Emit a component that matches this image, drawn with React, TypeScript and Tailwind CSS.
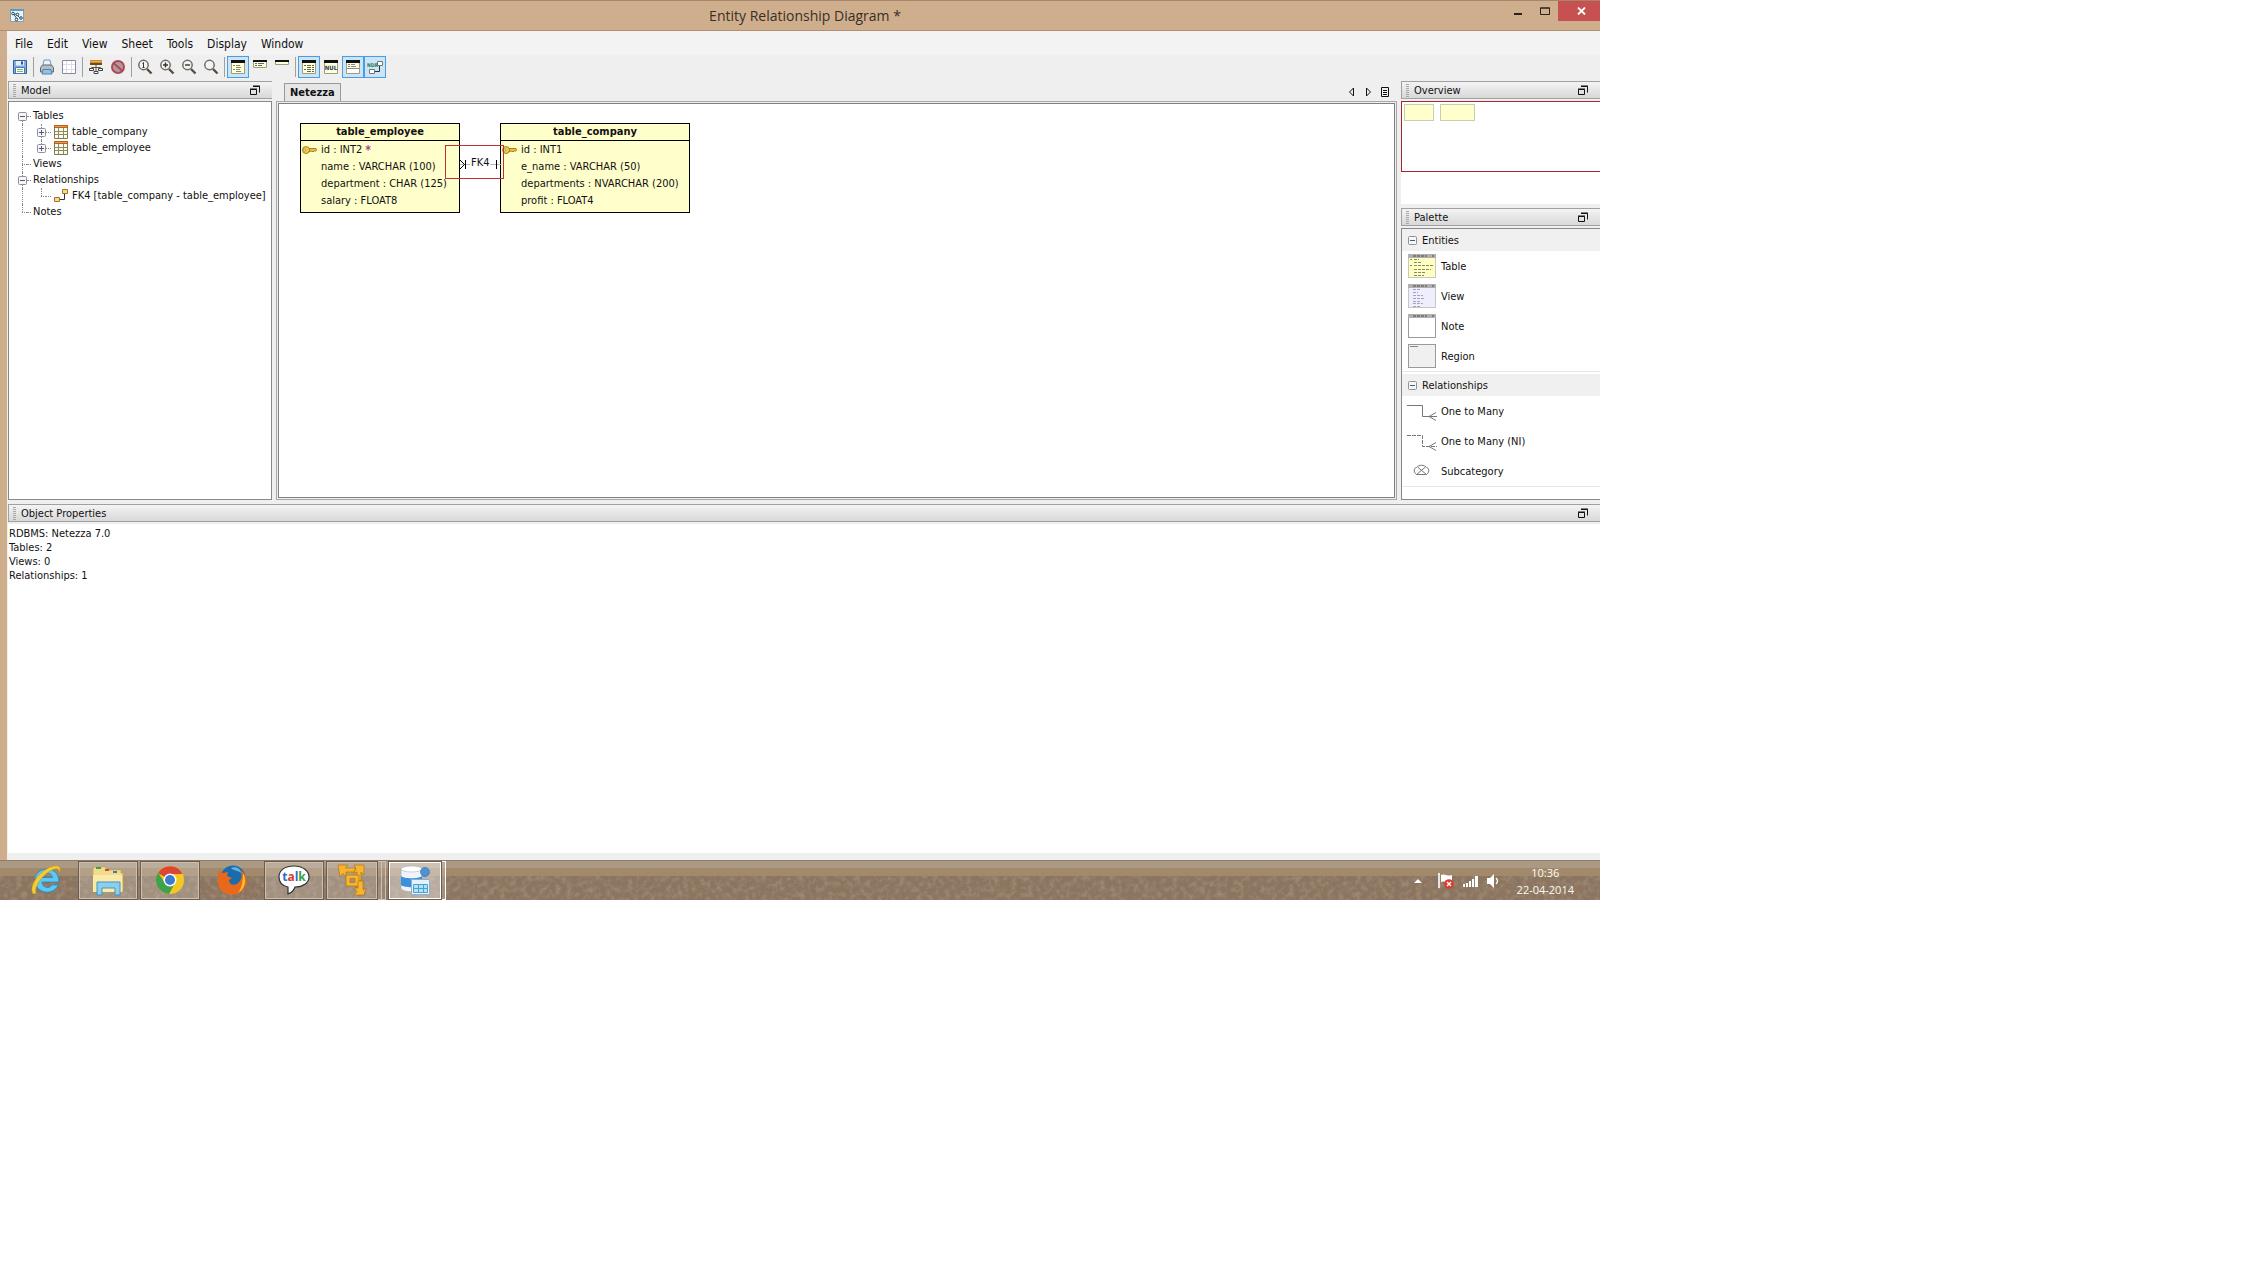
import React from 'react';
import clsx from 'clsx';

const Sep = () => <div className="mx-0.5 h-[20px] w-px shrink-0 bg-[#a0a0a0]"></div>;

const ToolButton = ({ label, active, children }: { label: string; active?: boolean; children: React.ReactNode }) => (
  <button
    aria-label={label}
    className={clsx(
      'flex h-[22px] w-[22px] shrink-0 items-center justify-center border',
      active ? 'border-[#4a9de0] bg-[#cce4f8]' : 'border-transparent',
    )}
  >
    <svg width="16" height="16" viewBox="0 0 16 16">
      {children}
    </svg>
  </button>
);

const Lens = ({ children }: { children?: React.ReactNode }) => (
  <>
    <path d="M10 10l4.5 4.5" stroke="#5b4a44" strokeWidth="2.4" />
    <circle cx="6.5" cy="6" r="4.7" fill="#f4f4f0" stroke="#6f6c64" strokeWidth="1.5" />
    {children}
  </>
);

const RestoreIcon = () => (
  <svg width="12" height="12" viewBox="0 0 12 12" fill="none" stroke="#111">
    <path d="M4 1.5h6.5v6" />
    <path d="M1.5 4.5h6v5h-6z" />
    <path d="M1 4h7M4 1h7" />
  </svg>
);

const PanelHeader = ({ title }: { title: string }) => (
  <div className="flex h-[18px] shrink-0 items-center border border-r-0 border-[#a0a0a0] bg-gradient-to-b from-[#f4f4f4] to-[#d8d8d8] pl-1 pr-[11px]">
    <div className="h-[13px] w-[3px] bg-[repeating-linear-gradient(#a8a8a8_0_1px,transparent_1px_2px)]"></div>
    <h2 className="grow pl-[5px] pt-0.5">{title}</h2>
    <button aria-label={'Float ' + title} className="pt-0.5">
      <RestoreIcon />
    </button>
  </div>
);

const Expander = ({ open }: { open: boolean }) => (
  <svg className="relative shrink-0" width="9" height="9" viewBox="0 0 9 9">
    <rect x=".5" y=".5" width="8" height="8" rx="1" fill="#f6f6f6" stroke="#919191" />
    <path d="M2 4.5h5" stroke="#44589c" />
    {!open && <path d="M4.5 2v5" stroke="#44589c" />}
  </svg>
);

const GridIcon = () => (
  <svg width="14" height="14" viewBox="0 0 14 14">
    <path d="M.5 .5h13v13H.5z" fill="#fdfbe6" stroke="#7d7a5c" />
    <path d="M0 0h14v3H0z" fill="#b8651b" />
    <path d="M1 1h12v1H1z" fill="#e39a4e" />
    <path d="M1 6.5h12M1 9.5h12M4.5 3v10M9.5 3v10" stroke="#8d8a6c" />
  </svg>
);

const LinkIcon = () => (
  <svg width="14" height="14" viewBox="0 0 14 14">
    <path d="M5 10.5h5.5V4" fill="none" stroke="#333" />
    <path d="M.5 8.5h5v4h-5zM8.500 .5h5v4h-5z" fill="#f9d98a" stroke="#a4722a" />
  </svg>
);

const TreeRow = ({ label, open, first, last }: { label: string; open?: boolean; first?: boolean; last?: boolean }) => (
  <div className="relative flex h-4 items-center pl-[9px]">
    <div
      className={clsx(
        'absolute left-[13px] w-px border-l border-dotted border-[#888]',
        first ? 'bottom-0 h-2' : last ? 'top-0 h-2' : 'top-0 h-4',
      )}
    ></div>
    {open ? <Expander open /> : <div className="ml-1 w-[5px] border-t border-dotted border-[#888]"></div>}
    <div className="w-1 border-t border-dotted border-[#888]"></div>
    <span className="pl-[2px]">{label}</span>
  </div>
);

const TreeLeaf = ({ label, link, endOfList }: { label: string; link?: boolean; endOfList?: boolean }) => (
  <div className="relative flex h-4 items-center pl-[28px]">
    <div className="absolute left-[13px] top-0 h-4 w-px border-l border-dotted border-[#888]"></div>
    <div className={clsx('absolute left-[32px] top-0 w-px border-l border-dotted border-[#888]', endOfList ? 'h-2' : 'h-4')}></div>
    {link ? <div className="ml-1 w-[5px] border-t border-dotted border-[#888]"></div> : <Expander open={false} />}
    <div className="mr-[3px] w-[5px] border-t border-dotted border-[#888]"></div>
    {link ? <LinkIcon /> : <GridIcon />}
    <span className="whitespace-nowrap pl-1">{label}</span>
  </div>
);

const KeyIcon = () => (
  <svg width="15" height="10" viewBox="0 0 15 10">
    <path d="M6 3.500h8l.7 1.500-1.500 1.500-1-.8-1.200 1.300-1-1L8 6.500H6z" fill="#f0c040" stroke="#8f6a10" strokeWidth=".8" />
    <circle cx="4" cy="5" r="3.500" fill="#f6cf4a" stroke="#8f6a10" strokeWidth=".8" />
    <circle cx="2.800" cy="5" r="1.200" fill="#fffbe0" stroke="#8f6a10" strokeWidth=".6" />
  </svg>
);

const Entity = ({ name, columns, className, required }: { name: string; columns: string[]; className: string; required?: boolean }) => (
  <div className={clsx('absolute top-[19px] h-[90px] border border-black bg-[#ffffcc]', className)}>
    <div className="flex h-[17px] items-center justify-center border-b border-black font-bold">{name}</div>
    {columns.map((col, i) => (
      <div key={col} className="flex h-[17px] items-center">
        <div className="w-5 pl-px">{i === 0 && <KeyIcon />}</div>
        <span className="whitespace-nowrap">{col}</span>
        {i === 0 && required && <span className="pl-[3px] text-[12px] font-bold text-[#a83c98]">*</span>}
      </div>
    ))}
  </div>
);

const SheetThumb = ({ kind }: { kind: 'table' | 'view' | 'note' | 'region' }) => {
  const fill = { table: '#ffffc4', view: '#eeeeff', note: '#ffffff', region: '#f0f0f0' }[kind];
  return (
    <svg width="30" height="24" viewBox="0 0 30 24">
      <rect x="1.500" y=".5" width="27" height="23" fill={fill} stroke={kind === 'table' || kind === 'view' ? '#c8c8b8' : '#9a9a9a'} />
      {kind === 'region' ? (
        <path d="M3 2.500h8" stroke="#888" />
      ) : (
        <>
          <path d="M1 0h28v4H1z" fill="#b0b0b0" />
          <path d="M6 2h14M25 2h2" stroke="#4a4a4a" strokeDasharray="3 1" />
        </>
      )}
      {kind === 'table' && (
        <path d="M3 5.500h2M7 5.500h5M7 8.500h8M3 11.500h2M7 11.500h19M7 15.500h17M7 18.500h12M7 21.500h10" stroke="#88886a" strokeDasharray="3 1" />
      )}
      {kind === 'view' && (
        <path d="M6 5.500h8M6 8.500h5M6 11.500h10M6 14.500h12M6 17.500h8M6 19.500h10M6 22.500h8" stroke="#a4a4ba" strokeDasharray="3 1" />
      )}
    </svg>
  );
};

const CrowIcon = ({ dashed }: { dashed?: boolean }) => (
  <svg width="30" height="20" viewBox="0 0 30 20" fill="none" stroke="#777">
    <path d="M0 4.500h15.500v11H30" strokeDasharray={dashed ? '4 1' : undefined} />
    <path d="M22 15.500l7-4M22 15.500l7 4" />
  </svg>
);

const SubcategoryIcon = () => (
  <svg width="30" height="20" viewBox="0 0 30 20" fill="none" stroke="#777">
    <path d="M9.500 13.500c-4-3-2-7 0-7 2-3 8-3 10 0 2 0 4 4 0 7z" />
    <path d="M10.500 6l9 7.500M18.500 6l-9 7.500" />
  </svg>
);

const PaletteGroup = ({ title, items }: { title: string; items: { label: string; icon: React.ReactNode }[] }) => (
  <section className="mb-0.5 border-b border-[#e8e8e8]">
    <h3 className="flex h-[22px] items-center bg-[#f0f0f0] pl-[6px] pt-px">
      <Expander open />
      <span className="pl-[5px] pt-px">{title}</span>
    </h3>
    {items.map((item) => (
      <button key={item.label} className="flex h-[30px] w-full items-center pl-[5px] text-left">
        {item.icon}
        <span className="pl-1 pt-0.5">{item.label}</span>
      </button>
    ))}
  </section>
);

const Task = ({ label, framed, children }: { label: string; framed?: boolean; children: React.ReactNode }) => (
  <button
    aria-label={label}
    className={clsx(
      'flex h-[39px] w-[60px] items-center justify-center border',
      framed ? 'border-[#6e5d4f] bg-white/20 outline outline-[#cbbfb3] -outline-offset-2' : 'border-transparent',
    )}
  >
    {children}
  </button>
);

const entityItems = [
  { label: 'Table', icon: <SheetThumb kind="table" /> },
  { label: 'View', icon: <SheetThumb kind="view" /> },
  { label: 'Note', icon: <SheetThumb kind="note" /> },
  { label: 'Region', icon: <SheetThumb kind="region" /> },
];

const relationItems = [
  { label: 'One to Many', icon: <CrowIcon /> },
  { label: 'One to Many (NI)', icon: <CrowIcon dashed /> },
  { label: 'Subcategory', icon: <SubcategoryIcon /> },
];

const App = () => {
  return (
    <div className="min-h-screen bg-white">
      <div className="w-full max-w-[1600px] bg-[#cfae8d] font-['DejaVu_Sans_Condensed','DejaVu_Sans',sans-serif] text-[11px] leading-[14px] text-[#111]">
        {/* Title bar */}
        <header className="flex h-[31px] items-start border-b border-t border-b-[#b09070] border-t-[#a58668]">
          <svg className="ml-[10px] mt-2" width="14" height="13" viewBox="0 0 14 13">
            <path d="M.5 .5h13v12H.5z" fill="#eaf4fa" stroke="#7ba0b8" />
            <path d="M0 0h14v2H0z" fill="#5d9cc4" />
            <path d="M3 4l4 2 4 4M3 4l4 6" fill="none" stroke="#31566e" />
            <g fill="#fff" stroke="#1f4660">
              <circle cx="3" cy="4.500" r="1.300" />
              <circle cx="7.500" cy="5.500" r="1.300" />
              <circle cx="6.500" cy="10.500" r="1.300" />
              <circle cx="11" cy="9" r="1.300" />
            </g>
          </svg>
          <h1 className="grow pl-[82px] pt-[5px] text-center font-['Open_Sans',sans-serif] text-[14px] leading-[20px] text-[#3a2f24]">
            Entity Relationship Diagram *
          </h1>
          <button aria-label="Minimize" className="flex h-5 w-7 items-center justify-center">
            <svg width="10" height="10" viewBox="0 0 10 10">
              <path d="M1 7h8v2H1z" fill="#2a211a" />
            </svg>
          </button>
          <button aria-label="Maximize" className="flex h-5 w-[26px] items-center justify-center">
            <svg width="10" height="8" viewBox="0 0 10 8">
              <path d="M.5 1h9v6.500h-9zM0 1h10" fill="none" stroke="#2a211a" />
            </svg>
          </button>
          <button aria-label="Close" className="flex h-5 w-[42px] items-center justify-center bg-[#c75050] pl-1">
            <svg width="9" height="8" viewBox="0 0 9 8">
              <path d="M1 .5l7 7M8 .5l-7 7" stroke="#fff" strokeWidth="1.800" />
            </svg>
          </button>
        </header>

        <div className="ml-[7px] flex flex-col bg-[#efefef]">
          {/* Menu */}
          <nav className="flex h-6 items-center gap-[14px] bg-[#f3f3f3] pl-2 pt-0.5 text-[12px]">
            {['File', 'Edit', 'View', 'Sheet', 'Tools', 'Display', 'Window'].map((item) => (
              <button key={item}>{item}</button>
            ))}
          </nav>

          {/* Toolbar */}
          <div className="flex h-[26px] items-center pl-0.5 pb-0.5">
            <ToolButton label="Save">
              <path d="M1.500 1.500h13v13h-13z" fill="#7fb0e4" stroke="#33609c" />
              <path d="M4 2h8v4.500H4z" fill="#e6eff9" />
              <path d="M9 2.500h2v3H9z" fill="#2f5690" />
              <path d="M3.500 8.500h9v6h-9z" fill="#fff" stroke="#4b78b4" />
              <path d="M5 10.500h6M5 12.500h6" stroke="#7cb86a" />
            </ToolButton>
            <Sep />
            <ToolButton label="Print">
              <path d="M5 1h6l1.500 7h-9z" fill="#e8f3ff" stroke="#7a94b4" />
              <path d="M1.500 8.500l2-2.500h9l2 2.500v4.500h-13z" fill="#b4bcc6" stroke="#5e6872" />
              <path d="M4 10.500h8l1 4.500H3z" fill="#8cc4f0" stroke="#5a7fa4" />
            </ToolButton>
            <ToolButton label="Page grid">
              <path d="M1.500 1.500h13v13h-13z" fill="#fff" stroke="#8888a0" />
              <path d="M2 5.500h12M2 10.500h12M5.500 2v12M10.500 2v12" stroke="#dcdcea" />
            </ToolButton>
            <Sep />
            <ToolButton label="Layout">
              <path d="M2 1h12v5H2z" fill="#6e4a24" />
              <path d="M2 2.500h12" stroke="#f4a838" strokeWidth="2.400" />
              <path d="M8 6v6M3.500 10V8.500h9V10" stroke="#555" fill="none" />
              <path d="M1.500 9.500h4v2h-4zM10.500 9.500h4v2h-4zM6 12.500h4v2H6z" fill="#fff" stroke="#444" />
            </ToolButton>
            <ToolButton label="Stop">
              <circle cx="8" cy="8" r="6" fill="#b09c9c" stroke="#b0485a" strokeWidth="2" />
              <path d="M3.500 4l9 8" stroke="#b0485a" strokeWidth="2" />
            </ToolButton>
            <Sep />
            <ToolButton label="Actual size">
              <Lens>
                <path d="M5.500 4.500l1-1v5M5.500 8.500h2" stroke="#333" fill="none" />
              </Lens>
            </ToolButton>
            <ToolButton label="Zoom in">
              <Lens>
                <path d="M4 6h5M6.500 3.500v5" stroke="#333" strokeWidth="1.400" />
              </Lens>
            </ToolButton>
            <ToolButton label="Zoom out">
              <Lens>
                <path d="M4 6h5" stroke="#333" strokeWidth="1.400" />
              </Lens>
            </ToolButton>
            <ToolButton label="Zoom">
              <Lens />
            </ToolButton>
            <Sep />
            <ToolButton label="Show columns" active>
              <path d="M1.500 1.500h13v13h-13z" fill="#ffffdc" stroke="#9c9c84" />
              <path d="M1 1h14v3H1z" fill="#111" />
              <path d="M3 6.500h2M6 6.500h4M6 8.500h5M3 10.500h2M6 10.500h4M6 12.500h5" stroke="#888860" />
            </ToolButton>
            <ToolButton label="Show keys">
              <path d="M1.500 1.500h13v7h-13z" fill="#ffffdc" stroke="#9c9c84" />
              <path d="M1 1h14v2H1z" fill="#111" />
              <path d="M3 4.500h2M6 4.500h6M3 6.500h2M6 6.500h4" stroke="#666" />
            </ToolButton>
            <ToolButton label="Show names">
              <path d="M1.500 1.500h13v4h-13z" fill="#ffffdc" stroke="#9c9c84" />
              <path d="M1 1h14v2H1z" fill="#111" />
            </ToolButton>
            <Sep />
            <ToolButton label="Data types" active>
              <path d="M1.500 1.500h13v13h-13z" fill="#ffffdc" stroke="#9c9c84" />
              <path d="M1 1h14v3H1z" fill="#111" />
              <path d="M3 6.500h2M6 6.500h4M11 6.500h2M6 8.500h4M11 8.500h2M3 10.500h2M6 10.500h4M11 10.500h2M6 12.500h4M11 12.500h2" stroke="#666650" />
            </ToolButton>
            <ToolButton label="Nullability">
              <path d="M1.500 1.500h13v13h-13z" fill="#ffffdc" stroke="#9c9c84" />
              <path d="M1 1h14v3H1z" fill="#111" />
              <text x="8" y="11" fontSize="6" fontWeight="bold" textAnchor="middle" fill="#1c3450">
                NUL
              </text>
            </ToolButton>
            <ToolButton label="Comments" active>
              <path d="M1.500 1.500h13v13h-13z" fill="#fff" stroke="#9c9c84" />
              <path d="M2 4h12v5H2z" fill="#ffffdc" />
              <path d="M1 1h14v3H1z" fill="#111" />
              <path d="M3 5.500h2M6 5.500h4M3 7.500h2M6 7.500h5M2 9.500h12" stroke="#888" />
            </ToolButton>
            <ToolButton label="Relation names" active>
              <path d="M6 12.500h6.500V6" stroke="#333" fill="none" />
              <path d="M10.500 2.500h5v4h-5zM2.500 10.500h5v4h-5z" fill="#fff" stroke="#777" />
              <text x="0" y="8" fontSize="5" fontWeight="bold" fill="#2c8050">
                NDR
              </text>
            </ToolButton>
          </div>

          {/* Workspace */}
          <div className="flex h-[419px] gap-1 pl-px">
            <aside className="flex w-[264px] shrink-0 flex-col gap-0.5">
              <PanelHeader title="Model" />
              <div className="grow border border-[#888] bg-white pt-[6px]">
                <TreeRow label="Tables" open first />
                <TreeLeaf label="table_company" />
                <TreeLeaf label="table_employee" endOfList />
                <TreeRow label="Views" />
                <TreeRow label="Relationships" open />
                <TreeLeaf label="FK4 [table_company - table_employee]" link endOfList />
                <TreeRow label="Notes" last />
              </div>
            </aside>

            <main className="flex min-w-0 grow flex-col">
              <div className="flex h-5 items-end justify-between pl-2">
                <button className="h-[18px] border border-b-0 border-[#999] bg-[#e6e6e6] px-[5px] font-bold">Netezza</button>
                <div className="flex items-center gap-[9px] pr-2 pb-1">
                  <button aria-label="Previous sheet">
                    <svg width="8" height="10" viewBox="0 0 8 10">
                      <path d="M6.500 1v8l-4-4z" fill="none" stroke="#111" />
                    </svg>
                  </button>
                  <button aria-label="Next sheet">
                    <svg width="8" height="10" viewBox="0 0 8 10">
                      <path d="M2.500 1v8l4-4z" fill="none" stroke="#111" />
                    </svg>
                  </button>
                  <button aria-label="Sheet list">
                    <svg width="8" height="10" viewBox="0 0 8 10">
                      <path d="M.5 .5h7v9h-7zM2 3.500h4M2 5.500h4M2 7.500h4" fill="none" stroke="#111" />
                    </svg>
                  </button>
                </div>
              </div>
              <div className="flex grow border border-[#a8a8a8] p-px">
                <div className="relative grow border border-[#808080] bg-white">
                  <Entity
                    name="table_employee"
                    className="left-[21px] w-[160px]"
                    columns={['id : INT2', 'name : VARCHAR (100)', 'department : CHAR (125)', 'salary : FLOAT8']}
                    required
                  />
                  <Entity
                    name="table_company"
                    className="left-[221px] w-[190px]"
                    columns={['id : INT1', 'e_name : VARCHAR (50)', 'departments : NVARCHAR (200)', 'profit : FLOAT4']}
                  />
                  <div className="absolute left-[166px] top-[41px] h-[34px] w-[59px] border border-[#c03030]">
                    <svg className="absolute left-[14px] top-[12px]" width="42" height="12" viewBox="0 0 42 12" fill="none">
                      <path d="M0 6.500h42" stroke="#bbb" />
                      <path d="M0 2l4.500 4.500-4.500 4.500M5.500 2v9M36.500 2v9" stroke="#000" />
                    </svg>
                    <span className="absolute left-[24px] top-[10px] bg-white px-px">FK4</span>
                  </div>
                </div>
              </div>
            </main>

            <aside className="flex w-[199px] shrink-0 flex-col">
              <PanelHeader title="Overview" />
              <div className="mt-0.5 h-[103px] bg-white">
                <div className="flex h-[71px] gap-[6px] border border-r-0 border-[#a02830] pl-0.5 pt-0.5">
                  <div className="h-[17px] w-[30px] border border-[#ccccb4] bg-[#ffffcc]"></div>
                  <div className="h-[17px] w-[35px] border border-[#ccccb4] bg-[#ffffcc]"></div>
                </div>
              </div>
              <div className="mt-1 flex grow flex-col gap-0.5">
                <PanelHeader title="Palette" />
                <div className="grow border border-r-0 border-[#888] bg-white">
                  <PaletteGroup title="Entities" items={entityItems} />
                  <PaletteGroup title="Relationships" items={relationItems} />
                </div>
              </div>
            </aside>
          </div>

          {/* Object properties */}
          <section className="mt-1 flex flex-col pl-px">
            <PanelHeader title="Object Properties" />
            <div className="mt-0.5 h-[329px] bg-white pl-px pt-[3px]">
              <p>RDBMS: Netezza 7.0</p>
              <p>Tables: 2</p>
              <p>Views: 0</p>
              <p>Relationships: 1</p>
            </div>
          </section>
          <div className="h-[7px]"></div>
        </div>

        {/* Taskbar */}
        <footer className="relative flex h-10 items-center bg-[linear-gradient(#8f7c66_0_1px,#ab9984_1px_8px,#a2896c_8px_16px,#8b7560_16px)] pl-4">
          {/* Sand texture */}
          <svg className="absolute bottom-0 left-0 h-6 w-full opacity-30" aria-hidden="true">
            <filter id="sand" x="0" y="0" width="100%" height="100%">
              <feTurbulence type="fractalNoise" baseFrequency="0.18" numOctaves="3" seed="4" />
              <feColorMatrix values="0 0 0 0 .72  0 0 0 0 .62  0 0 0 0 .48  1.8 0 0 0 -.75" />
            </filter>
            <rect width="100%" height="100%" filter="url(#sand)" />
          </svg>
          <div className="relative flex grow items-center gap-0.5">
            <Task label="Internet Explorer">
              <svg width="32" height="32" viewBox="0 0 32 32">
                <path
                  d="M29 18H12c0 6 8 7 10 3h6.500C22 33 5 29 5 16 5 2 29 0 29 18zM12 13.500h10.500c-.5-6-10-6-10.500 0z"
                  fill="#5cc8f4"
                  fillRule="evenodd"
                  stroke="#1c80c0"
                  strokeWidth=".7"
                />
                <path d="M3 30C-3 20 16 0 28 2c3 1 2.500 5 1.500 7 0-3-1.500-5-4.500-4C14 8 4 22 6 29c-1 1-2 1-3 1z" fill="#f4cc34" stroke="#b88c14" strokeWidth=".5" />
              </svg>
            </Task>
            <Task label="File Explorer" framed>
              <svg width="32" height="32" viewBox="0 0 32 32">
                <path d="M3 3h10l2 3h14v3h2v19H1V5z" fill="#f2dc8c" stroke="#c4a040" strokeWidth=".6" />
                <path d="M1 11h29v17H1z" fill="#f9eaa8" />
                <path d="M4 3h5v2H4z" fill="#3ca048" />
                <path d="M13 5h4v2h-4z" fill="#d04838" />
                <path d="M21 7h4v2h-4z" fill="#3878c0" />
                <path d="M5 18h23v13h-5v-7H10v7H5z" fill="#8ccef0" stroke="#4494c4" />
              </svg>
            </Task>
            <Task label="Chrome" framed>
              <svg width="30" height="30" viewBox="0 0 30 30">
                <circle cx="15" cy="15" r="14" fill="#f4c820" />
                <path d="M15 15L3 8A14 14 0 0 1 27.500 9H15z" fill="#dc4434" />
                <path d="M15 15l-5 3L3 7.600A14 14 0 0 0 14 29l6-11z" fill="#40a04c" />
                <circle cx="15" cy="15" r="6.500" fill="#fff" />
                <circle cx="15" cy="15" r="5" fill="#3c7cd0" />
              </svg>
            </Task>
            <Task label="Firefox">
              <svg width="32" height="32" viewBox="0 0 32 32">
                <circle cx="17" cy="14" r="12.500" fill="#1c6cac" />
                <path d="M15 4c5-2 10 1 10 5-3-3-7-2-10-5z" fill="#64b4e4" />
                <path d="M3 6l4 3 5-1-1 4 5 2-3 2c0 5 6 6 9 3 5-4 4-9 2-13 7 4 9 13 4 19C17 37 0 29 2 15z" fill="#e8681c" />
                <path d="M27 9c4 7 2 16-5 20 4-5 5-12 5-20z" fill="#f8c430" />
              </svg>
            </Task>
            <Task label="Talk" framed>
              <svg width="32" height="32" viewBox="0 0 32 32">
                <path d="M16 2C7 2 1 6 1 13c0 6 4 9 9 10l0 7c3-1 6-4 7-7 8 0 14-4 14-10S25 2 16 2z" fill="#fff" stroke="#333" strokeWidth="1.200" />
                <text x="16" y="17" fontSize="12" fontWeight="bold" textAnchor="middle" fontFamily="Open Sans">
                  <tspan fill="#2c6cd4">t</tspan>
                  <tspan fill="#d43c2c">a</tspan>
                  <tspan fill="#2c6cd4">l</tspan>
                  <tspan fill="#38a040">k</tspan>
                </text>
              </svg>
            </Task>
            <div className="flex">
              <button
                aria-label="VMware"
                className="flex h-[39px] w-[52px] items-center justify-center border border-[#6e5d4f] bg-white/20 outline outline-[#cbbfb3] -outline-offset-2"
              >
                <svg width="30" height="32" viewBox="0 0 30 32" stroke="#a86c0c" strokeWidth=".6" fill="#f8b42c">
                  <path d="M1 1h10L8.500 4H18v4H9v5L6 9.500 3 13z" />
                  <path d="M17 1h10v10l-3-3v9h-4V8l-4 1 3-4z" />
                  <path d="M9 11h13v11H9zM13 14.500v4h5v-4z" fillRule="evenodd" />
                  <path d="M21 17h5v9l3-2-2 7H17l3-3.500-3-3.500h4z" />
                </svg>
              </button>
              <div className="h-[39px] w-1 border-y border-r border-[#cbbfb3] bg-white/10"></div>
              <div className="h-[39px] w-1 border-y border-r border-[#cbbfb3] bg-white/10"></div>
            </div>
            <div className="flex">
              <button
                aria-label="Data Modeler"
                className="flex h-[39px] w-[54px] items-center justify-center border border-[#6e5d4f] bg-white/40 outline outline-white -outline-offset-2"
              >
                <svg width="32" height="32" viewBox="0 0 32 32">
                  <path d="M2 5v19c0 5 21 5 21 0V5z" fill="#f0f4f8" stroke="#98a4b0" strokeWidth=".6" />
                  <path d="M2 12v9c3 3 18 3 21 0v-9c-3 3-18 3-21 0z" fill="#3c90dc" />
                  <ellipse cx="12.500" cy="5" rx="10.500" ry="3" fill="#fff" stroke="#a8b4c0" strokeWidth=".6" />
                  <circle cx="26" cy="8" r="4.500" fill="#4c94d4" stroke="#2c6cac" strokeWidth=".6" />
                  <path d="M12.500 15.500h18v15h-18z" fill="#e4f2fc" stroke="#8cb0cc" />
                  <path d="M14.500 20.500h14v8h-14zM14.500 24.500h14M19.500 20.500v8M24.500 20.500v8" fill="#b4e0f8" stroke="#4ca0d0" />
                </svg>
              </button>
              <div className="h-[39px] w-1 border-y border-r border-white bg-white/20"></div>
            </div>
          </div>
          <div className="relative flex items-center gap-2 pr-[26px] pt-px text-[#fffaf0]">
            <svg width="8" height="8" viewBox="0 0 8 8">
              <path d="M0 6l4-4 4 4z" fill="#fff" />
            </svg>
            <svg className="ml-2" width="17" height="16" viewBox="0 0 17 16">
              <path d="M1 0v15" stroke="#fff" strokeWidth="1.600" />
              <path d="M3 2c4-2 6 2 11 0v7c-5 2-7-2-11 0z" fill="#fff" />
              <circle cx="11" cy="11" r="4.800" fill="#d83c34" />
              <path d="M9 9l4 4M13 9l-4 4" stroke="#fff" strokeWidth="1.400" />
            </svg>
            <svg width="16" height="12" viewBox="0 0 16 12">
              <path d="M0 9h2v3H0zM3 8h2v4H3zM6 6h2v6H6zM9 4h2v8H9zM12 1h3v11h-3z" fill="#fff" />
            </svg>
            <svg width="14" height="14" viewBox="0 0 14 14">
              <path d="M0 4h3l4-4v14l-4-4H0z" fill="#fff" />
              <path d="M9 4c2 2 2 4 0 6" fill="none" stroke="#fff" strokeWidth="1.300" />
            </svg>
            <div className="pl-2 text-center font-['Open_Sans',sans-serif] leading-[17px]">
              <div>10:36</div>
              <div>22-04-2014</div>
            </div>
          </div>
        </footer>
      </div>
    </div>
  );
};

export default App;
